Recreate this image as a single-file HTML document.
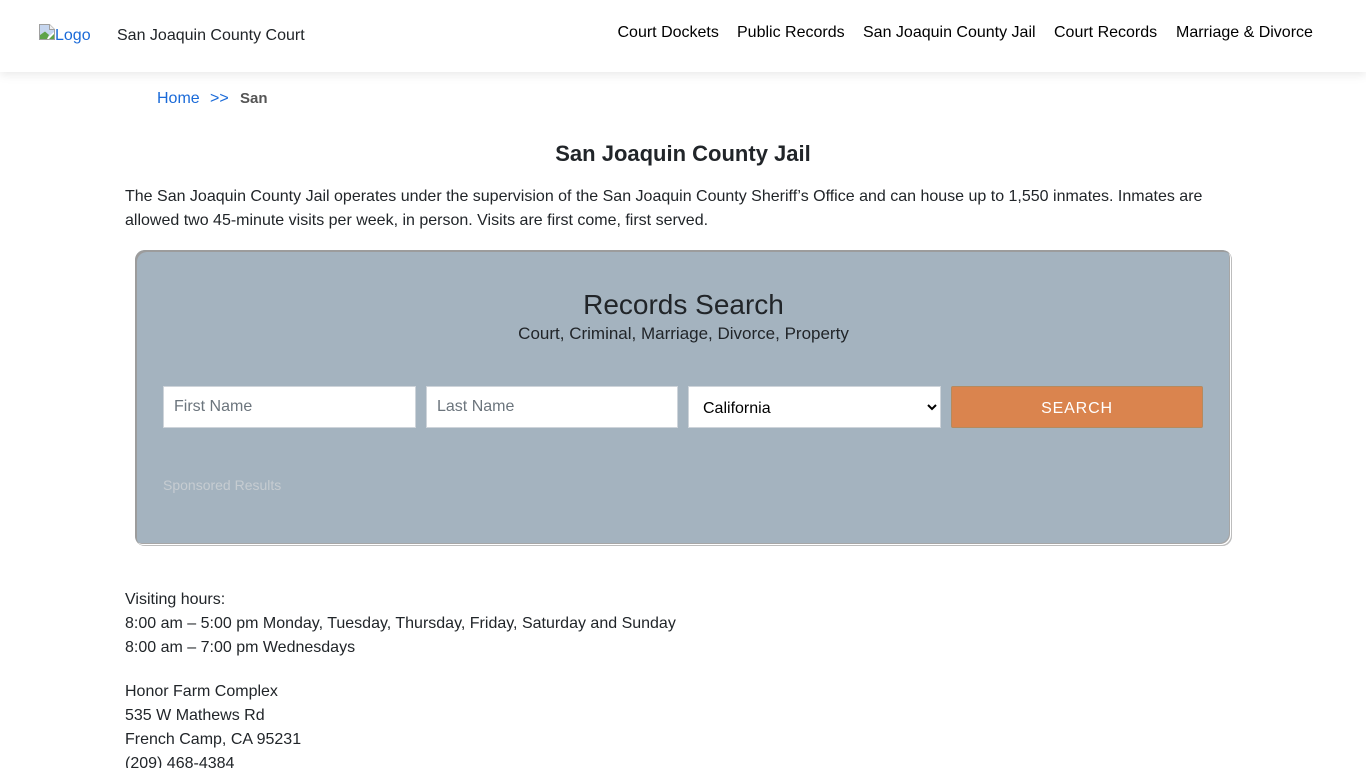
<!DOCTYPE html>
<html lang="en">
<head>
<meta charset="utf-8">
<title>San Joaquin County Jail</title>
<style>
html,body{margin:0;padding:0;width:1366px;height:768px;overflow:hidden;background:#fff}
body{font-family:"Liberation Sans",sans-serif;font-size:16px;line-height:24px;color:#212529;position:relative}
.a{position:absolute;white-space:nowrap}
a{text-decoration:none}
.hdr{position:absolute;left:0;top:0;width:1366px;height:72px;background:#fff;box-shadow:0 2px 10px rgba(0,0,0,.1)}
.nav{color:#000;top:21px}
.blue{color:#1a6ad8}
.box{position:absolute;left:135px;top:250px;width:1097px;height:296px;background:#a4b3bf;border-radius:10px;box-shadow:inset 2px 2px 0 #9c9c9c,inset -1px -1px 0 #bdbdbd,inset -2px -2px 0 #fff,inset -3px -3px 0 #a6a6a6}
.inp{position:absolute;top:386px;height:42px;background:#fff;box-sizing:border-box;border:1px solid #ced4da;color:#6c757d;line-height:40px;padding-left:10px;font-size:16px}
select{position:absolute;left:688px;top:386px;width:253px;height:42px;box-sizing:border-box;border:1px solid #ced4da;background:#fff;color:#000;font:16px/24px "Liberation Sans",sans-serif;padding:2px 0 0 10px;border-radius:0;margin:0}
.btn{position:absolute;left:951px;top:386px;width:252px;height:42px;box-sizing:border-box;background:#da844e;border:1px solid #b58a5e;border-radius:2px;color:#fff;text-align:center;line-height:43px;letter-spacing:.85px;font-size:16px}
</style>
</head>
<body>
<div class="hdr"></div>
<svg class="a" style="left:39px;top:24px" width="16" height="16" viewBox="0 0 16 16"><path d="M.5.5H10.5L15.5 5.5V15.5H.5Z" fill="#fff" stroke="#a0a0a0"/><path d="M1 1H10V6H15V8L9 13L6 8L1 11Z" fill="#c6d6ef"/><path d="M1 15V11L6 7.5L10 11L8 15Z" fill="#5ea34a"/><path d="M10 15L15 10V15Z" fill="#5ea34a"/><path d="M10.5.5V5.5H15.5" fill="#f0f0f0" stroke="#a0a0a0"/></svg>
<a class="a blue" style="left:55px;top:24px">Logo</a>
<div class="a" style="left:117px;top:24px">San Joaquin County Court</div>
<div class="a nav" style="left:617.5px">Court Dockets</div>
<div class="a nav" style="left:737px">Public Records</div>
<div class="a nav" style="left:863px">San Joaquin County Jail</div>
<div class="a nav" style="left:1054px">Court Records</div>
<div class="a nav" style="left:1176px">Marriage &amp; Divorce</div>

<a class="a blue" style="left:157px;top:87px">Home</a>
<span class="a blue" style="left:210px;top:87px;font-size:16px">&gt;&gt;</span>
<b class="a" style="left:240px;top:87px;color:#555;font-size:15px">San</b>

<div class="a" style="left:0;width:1366px;text-align:center;top:141px;font-size:22px;line-height:26px;font-weight:bold">San Joaquin County Jail</div>
<div class="a" style="left:125px;top:185px">The San Joaquin County Jail operates under the supervision of the San Joaquin County Sheriff’s Office and can house up to 1,550 inmates. Inmates are<br>allowed two 45-minute visits per week, in person. Visits are first come, first served.</div>

<div class="box"></div>
<div class="a" style="left:135px;width:1097px;text-align:center;top:289px;font-size:28px;line-height:32px">Records Search</div>
<div class="a" style="left:135px;width:1097px;text-align:center;top:322px;font-size:17px">Court, Criminal, Marriage, Divorce, Property</div>
<div class="inp" style="left:163px;width:253px">First Name</div>
<div class="inp" style="left:426px;width:252px">Last Name</div>
<select><option>California</option></select>
<div class="btn">SEARCH</div>
<div class="a" style="left:163px;top:473px;font-size:14px;color:#c6ccd1">Sponsored Results</div>

<div class="a" style="left:125px;top:587.5px">Visiting hours:<br>8:00 am – 5:00 pm Monday, Tuesday, Thursday, Friday, Saturday and Sunday<br>8:00 am – 7:00 pm Wednesdays</div>
<div class="a" style="left:125px;top:679.5px">Honor Farm Complex<br>535 W Mathews Rd<br>French Camp, CA 95231<br>(209) 468-4384</div>
</body>
</html>
